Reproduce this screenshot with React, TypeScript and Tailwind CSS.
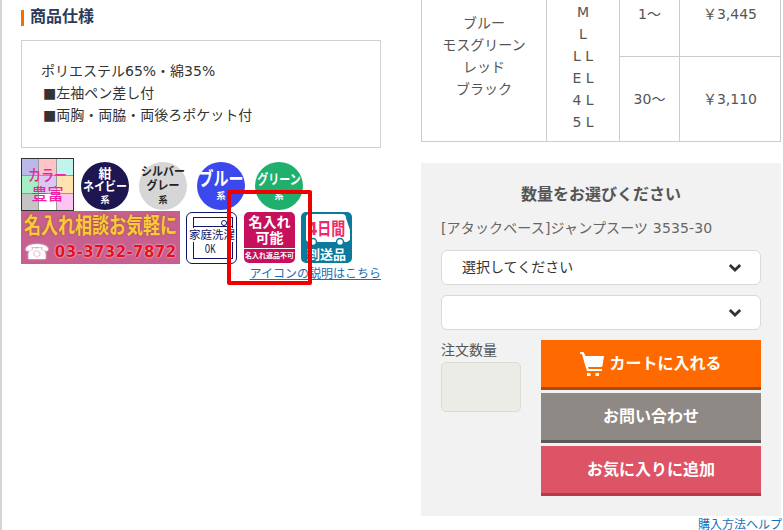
const font = { fontFamily: '"DejaVu Sans","Noto Sans CJK JP",sans-serif' };
function Circle({ bg, top, fg = "text-white" }: { bg: string; top: { t: string; c: string }[]; fg?: string }) {
  return (
    <div className={`w-[48px] h-[48px] shrink-0 rounded-full flex flex-col items-center justify-center font-bold ${bg} ${fg}`}>
      {top.map((x) => (
        <span key={x.t} className={`whitespace-nowrap ${x.c}`}>{x.t}</span>
      ))}
      <span className="text-[9px] leading-[10px] mt-[1px]">系</span>
    </div>
  );
}
function Chevron() {
  return (
    <svg width="14" height="10" viewBox="0 0 14 10" className="absolute right-[18px] top-1/2 -translate-y-1/2">
      <path d="M1.8 2 7 7 12.2 2" fill="none" stroke="#333" strokeWidth="2.8" />
    </svg>
  );
}
function Select({ label }: { label?: string }) {
  return (
    <div className="relative h-[35px] bg-white border border-[#d9d9d9] rounded-[6px] flex items-center pl-[20px] text-[14px] text-[#333]">
      {label}
      <Chevron />
    </div>
  );
}
export default function App() {
  return (
    <div className="w-[783px] h-[530px] overflow-hidden bg-white relative flex border-l-2 border-[#d4d4d4]" style={font}>
      <div className="w-[360px] ml-[19px] shrink-0 pt-[10px]">
        <h2 className="h-[16px] border-l-[3px] border-[#ee7000] pl-[6px] text-[16px] leading-[14px] font-bold text-[#2c3a5a]">商品仕様</h2>
        <div className="mt-[14px] h-[108px] border border-[#d0d0d0] pl-[19px] pt-[19px] text-[14px] leading-[22px] text-[#333]">
          <p>ポリエステル65%・綿35%</p>
          <p className="pl-[2px]">■左袖ペン差し付</p>
          <p className="pl-[2px]">■両胸・両脇・両後ろポケット付</p>
        </div>
        <div className="mt-[10px] flex gap-[10px] h-[53px] items-center pt-[2px]">
          <div className="relative w-[53px] h-[53px] -mt-[2px] shrink-0 mr-[-3px] border border-[#333] bg-[#999] gap-px grid grid-cols-3 grid-rows-3">
            <div className="bg-[#b9b9ea]" /><div className="bg-[#ffc4c8]" /><div className="bg-[#bff5ec]" />
            <div className="bg-[#a6efc4]" /><div className="bg-[#d9c8f2]" /><div className="bg-[#fde3b0]" />
            <div className="bg-[#c4c4c4]" /><div className="bg-white" /><div className="bg-[#fcc4f2]" />
            <div className="absolute inset-0 flex flex-col items-center justify-center text-[#f01fa8] font-medium">
              <span className="text-[13px] leading-[19px] scale-y-125">カラー</span>
              <span className="text-[16px] leading-[19px]">豊富</span>
            </div>
          </div>
          <Circle bg="bg-[#1d1650]" top={[{ t: "紺", c: "text-[13px] leading-[15px]" }, { t: "ネイビー", c: "text-[11px] leading-[13px] scale-y-110" }]} />
          <Circle bg="bg-[#d6d6d6]" fg="text-[#222]" top={[{ t: "シルバー", c: "text-[11px] leading-[14px] scale-y-110" }, { t: "グレー", c: "text-[11px] leading-[14px] scale-y-110" }]} />
          <Circle bg="bg-[#3a48ee]" top={[{ t: "ブルー", c: "text-[15px] leading-[20px] scale-y-125" }]} />
          <Circle bg="bg-[#1fb06d]" top={[{ t: "グリーン", c: "text-[11px] leading-[20px] scale-y-125" }]} />
        </div>
        <div className="flex gap-[6px] h-[53px]">
          <div className="w-[159px] h-[53px] shrink-0 bg-[#c7608f] flex flex-col items-center font-bold">
            <span className="text-[#ffc83c] text-[17px] leading-[31px] whitespace-nowrap scale-y-125 [text-shadow:0_0_2px_#8a5a20]">名入れ相談お気軽に</span>
            <span className="text-[#e8101c] text-[15px] leading-[20px] tracking-[0.4px] whitespace-nowrap flex items-center gap-[5px] [text-shadow:0_0_2px_#fff]">
              <span className="text-white text-[20px] leading-[20px]">☎</span>03-3732-7872
            </span>
          </div>
          <div className="w-[51px] h-[52px] mt-px shrink-0 border border-[#101868] rounded-[6px] bg-white relative overflow-hidden text-[#101868]">
            <div className="absolute left-[6px] top-[4px] right-[3px] bottom-[4px] border border-[#101868]" />
            <div className="absolute left-[6px] top-[4px] right-[3px] h-[10px] border border-[#101868]" />
            <div className="absolute right-[9px] top-[7px] w-[6px] h-[6px] rounded-full border border-[#101868]" />
            <div className="absolute left-[2px] top-[15px] text-[11.5px] leading-[14px] whitespace-nowrap bg-white">家庭洗濯</div>
            <div className="absolute left-[16px] top-[30px] text-[12px] leading-[14px] scale-x-75" style={{ fontFamily: '"Liberation Mono",monospace' }}>OK</div>
          </div>
          <div className="w-[51px] h-[51px] mt-px ml-[1px] shrink-0 rounded-[5px] bg-[#c6105c] text-white font-bold flex flex-col items-center pt-[2px]">
            <span className="text-[14px] leading-[16px] whitespace-nowrap">名入れ</span>
            <span className="text-[14px] leading-[16px]">可能</span>
            <span className="mt-[2px] w-full border-t border-white text-[7px] leading-[14px] whitespace-nowrap text-center overflow-hidden">名入れ返品不可</span>
          </div>
          <div className="w-[51px] h-[51px] mt-px shrink-0 rounded-[5px] bg-[#0b7a9c] text-white relative flex flex-col items-center">
            <svg width="49" height="36" viewBox="0 0 49 36" className="absolute left-[1px] top-0">
              <path d="M6 2h34a4 4 0 0 1 4 4l4 12v10l-3 2H6l-2-2V4z" fill="#fff" />
              <circle cx="11" cy="30" r="3.5" fill="#fff" stroke="#0b7a9c" strokeWidth="1.5" />
              <circle cx="38" cy="30" r="3.5" fill="#fff" stroke="#0b7a9c" strokeWidth="1.5" />
            </svg>
            <span className="relative mt-[7px] text-[14px] leading-[20px] font-bold text-[#f0286c] whitespace-nowrap scale-y-125">4日間</span>
            <span className="absolute bottom-[1px] text-[13px] leading-[15px] font-bold whitespace-nowrap">到送品</span>
          </div>
        </div>
        <div className="text-right text-[12px] leading-[14px] mt-[3px]">
          <a className="text-[#1a6fb5] underline">アイコンの説明はこちら</a>
        </div>
      </div>

      <div className="w-[360px] ml-[40px] shrink-0">
        <table className="w-[360px] -mt-[3px] border-collapse table-fixed text-[14px] text-[#555] text-center">
          <colgroup><col className="w-[125px]" /><col className="w-[73px]" /><col className="w-[60px]" /><col /></colgroup>
          <tbody>
            <tr className="h-[59px]">
              <td rowSpan={2} className="border border-[#ccc] leading-[22px] align-middle pb-[27px]">ブルー<br />モスグリーン<br />レッド<br />ブラック</td>
              <td rowSpan={2} className="border border-[#ccc] leading-[22px] align-middle pb-[5px]">M<br />L<br />L L<br />E L<br />4 L<br />5 L</td>
              <td className="border border-[#ccc] align-top pt-[5px] leading-[22px]">1〜</td>
              <td className="border border-[#ccc] align-top pt-[5px] leading-[22px]">￥3,445</td>
            </tr>
            <tr className="h-[85px]">
              <td className="border border-[#ccc]">30〜</td>
              <td className="border border-[#ccc]">￥3,110</td>
            </tr>
          </tbody>
        </table>
        <div className="mt-[21px] h-[353px] bg-[#f2f2f2] px-[20px] pt-[20px]">
          <h3 className="text-center text-[16px] leading-[24px] font-bold text-[#555]">数量をお選びください</h3>
          <p className="mt-[11px] text-[14px] leading-[20px] tracking-[0.15px] text-[#666] whitespace-nowrap">[アタックベース]ジャンプスーツ 3535-30</p>
          <div className="mt-[12px] flex flex-col gap-[10px]"><Select label="選択してください" /><Select /></div>
          <div className="mt-[10px] flex justify-between">
            <div className="w-[80px]">
              <p className="text-[14px] leading-[20px] text-[#555]">注文数量</p>
              <div className="mt-[2px] h-[50px] bg-[#ecece6] border border-[#dcdcd6] rounded-[5px]" />
            </div>
            <div className="w-[220px] flex flex-col gap-[3px] text-white text-[16px] font-bold [text-shadow:0_0_1px_#fff]">
              <button className="h-[50px] bg-[#ff6a00] border-b-[3px] border-[#b04a08] flex items-center justify-center gap-[5px]">
                <svg width="24" height="26" viewBox="0 0 24 26" fill="#fff">
                  <path d="M0 1h3.5l2 4H24l-1.5 9.5c-.2 1-.9 1.5-1.8 1.5H8l.7 2H22v2H7l-1.800-5.500L2 3H0z" />
                  <rect x="7" y="22" width="3.500" height="3" /><rect x="15.500" y="22" width="3.500" height="3" />
                </svg>
                カートに入れる
              </button>
              <button className="h-[50px] bg-[#8f8985] border-b-[3px] border-[#5a5a58]">お問い合わせ</button>
              <button className="h-[50px] bg-[#dd5467] border-b-[3px] border-[#b63a4e]">お気に入りに追加</button>
            </div>
          </div>
        </div>
        <div className="text-right text-[12px] leading-[14px] text-[#1a6fb5] whitespace-nowrap mt-[2px] -mr-[1px]">購入方法ヘルプ</div>
      </div>
      <div className="absolute left-[225px] top-[190px] w-[85px] h-[95px] border-[4px] border-[#ee0000] rounded-[2px]" />
    </div>
  );
}
